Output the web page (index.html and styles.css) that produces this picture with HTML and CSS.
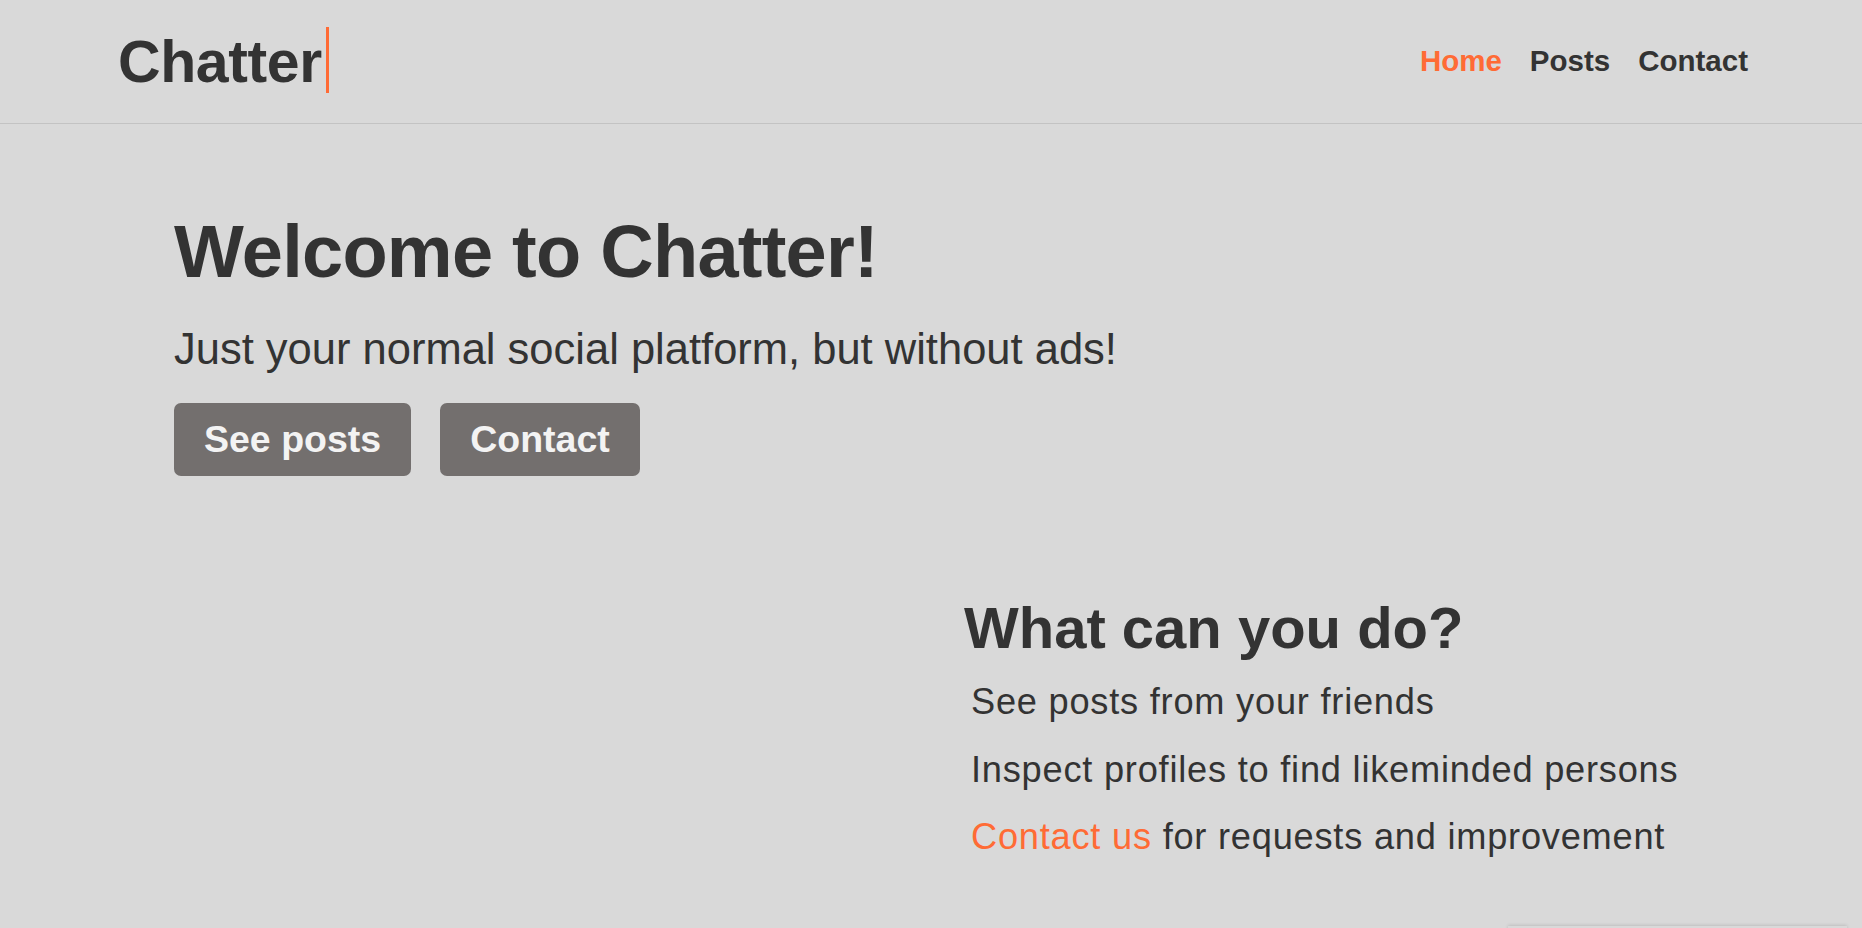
FILE: index.html
```html
<!DOCTYPE html>
<html lang="en">
<head>
<meta charset="utf-8">
<title>Chatter</title>
<link rel="stylesheet" href="styles.css">
</head>
<body>
<header class="site-header">
  <a class="logo" href="#"><span class="logo-text">Chatter</span><span class="cursor"></span></a>
  <nav class="nav">
    <a class="nav-link active" href="#">Home</a>
    <a class="nav-link" href="#">Posts</a>
    <a class="nav-link" href="#">Contact</a>
  </nav>
</header>
<main class="main">
  <section class="hero">
    <h1 class="hero-title">Welcome to Chatter!</h1>
    <p class="hero-sub">Just your normal social platform, but without ads!</p>
    <div class="hero-actions">
      <a class="btn" href="#">See posts</a>
      <a class="btn" href="#">Contact</a>
    </div>
  </section>
  <section class="features">
    <div class="features-media"></div>
    <div class="features-body">
      <h2 class="features-title">What can you do?</h2>
      <ul class="features-list">
        <li>See posts from your friends</li>
        <li>Inspect profiles to find likeminded persons</li>
        <li><a class="accent" href="#">Contact us</a> for requests and improvement</li>
      </ul>
    </div>
  </section>
</main>
<div class="widget"></div>
</body>
</html>
```
FILE: styles.css
```css
* { box-sizing: border-box; }
html, body { margin: 0; padding: 0; }
body {
  background: #d9d9d9;
  color: #333333;
  font-family: "Liberation Sans", Arial, Helvetica, sans-serif;
  overflow: hidden;
  height: 928px;
}
a { text-decoration: none; color: inherit; }

.site-header {
  height: 124px;
  border-bottom: 1px solid #c3c3c3;
  display: flex;
  align-items: center;
  justify-content: space-between;
  padding: 0 114px 0 118px;
}
.logo {
  display: flex;
  align-items: center;
  margin-bottom: 3px;
}
.logo-text {
  font-size: 59px;
  font-weight: 700;
  line-height: 60px;
  padding-top: 3px;
  letter-spacing: -0.4px;
  color: #333333;
}
.cursor {
  width: 3px;
  height: 66px;
  background: #ff6b35;
  margin-left: 4px;
}
.nav {
  display: flex;
  gap: 28px;
  margin-bottom: 2px;
}
.nav-link {
  font-size: 29.5px;
  font-weight: 700;
  line-height: 34px;
  color: #333333;
}
.nav-link.active { color: #ff6b35; }

.main { padding: 0 0 0 174px; }

.hero-title {
  margin: 85px 0 0;
  font-size: 74px;
  line-height: 86px;
  font-weight: 700;
  letter-spacing: -0.75px;
}
.hero-sub {
  margin: 29px 0 0;
  font-size: 43.5px;
  line-height: 50px;
}
.hero-actions {
  display: flex;
  gap: 29px;
  margin-top: 29px;
}
.btn {
  display: block;
  background: #736f6e;
  color: #f3f3f3;
  font-size: 37.5px;
  font-weight: 700;
  line-height: 43px;
  padding: 15px 30px;
  border-radius: 7px;
}

.features {
  display: grid;
  grid-template-columns: 790px 1fr;
  margin-top: 118px;
}
.features-title {
  margin: 0;
  font-size: 58px;
  line-height: 67px;
  font-weight: 700;
}
.features-list {
  list-style: none;
  margin: 21px 0 0;
  padding: 0 0 0 7px;
  display: flex;
  flex-direction: column;
  gap: 27.5px;
}
.features-list li {
  font-size: 36.2px;
  line-height: 40px;
  letter-spacing: 0.78px;
}
.accent { color: #ff6b35; }

.widget {
  position: fixed;
  right: 15px;
  bottom: -100px;
  width: 339px;
  height: 102px;
  background: #d9d9d9;
  box-shadow: 0 -1px 3px rgba(0, 0, 0, 0.12);
}
```
